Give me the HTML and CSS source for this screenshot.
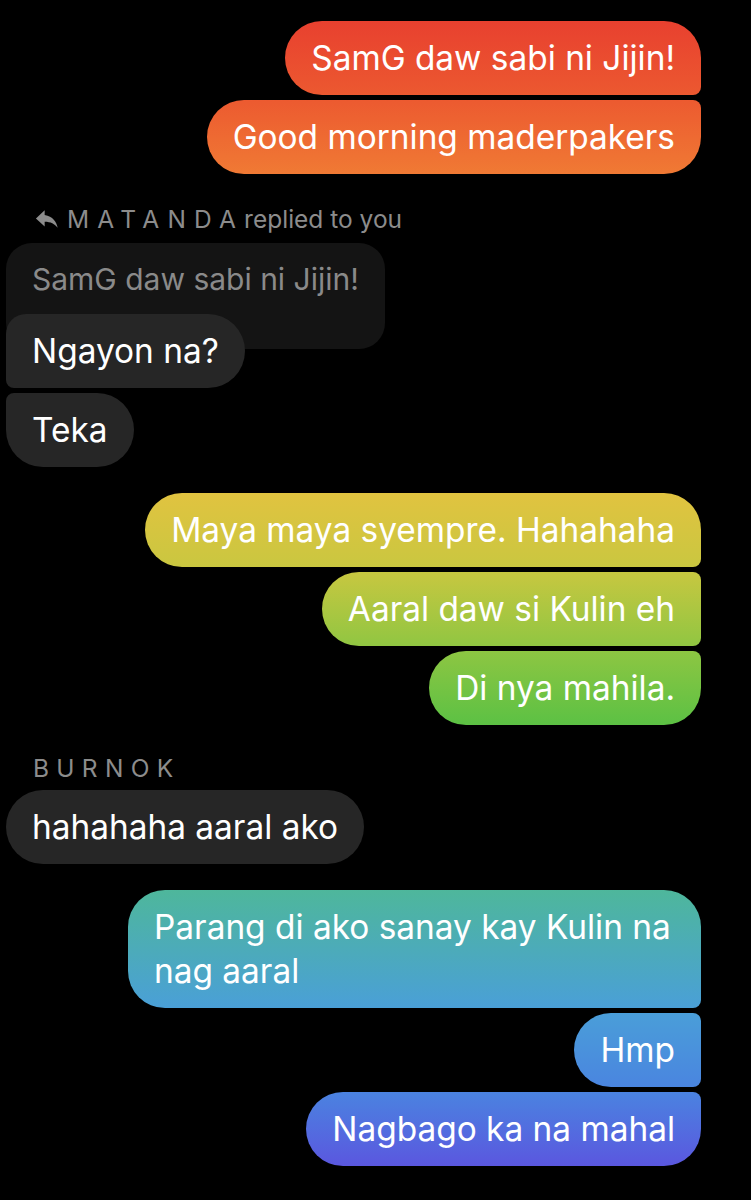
FILE: index.html
```html
<!DOCTYPE html>
<html lang="en">
<head>
  <meta charset="UTF-8">
  <meta name="viewport" content="width=device-width, initial-scale=1.0">
  <title>Chat</title>
  <link rel="stylesheet" href="styles.css">
</head>
<body>
  <div class="chat">
    <div class="group sent">
      <div class="bubble first">SamG daw sabi ni Jijin!</div>
      <div class="bubble last">Good morning maderpakers</div>
    </div>

    <div class="group received">
      <div class="label">
        <svg class="reply-icon" viewBox="0 0 24 24" width="28" height="28"><path d="M10 8.5V4.5L2.5 11.5 10 18.5v-4.2c5.2 0 8.6 1.7 11.2 5.3-1.1-5.2-4.2-10.1-11.2-11.1z" fill="currentColor"/></svg><span class="name">MATANDA</span> replied to you
      </div>
      <div class="quote">SamG daw sabi ni Jijin!</div>
      <div class="bubble first">Ngayon na?</div>
      <div class="bubble last">Teka</div>
    </div>

    <div class="group sent">
      <div class="bubble first">Maya maya syempre. Hahahaha</div>
      <div class="bubble">Aaral daw si Kulin eh</div>
      <div class="bubble last">Di nya mahila.</div>
    </div>

    <div class="group received">
      <div class="label"><span class="name tight">BURNOK</span></div>
      <div class="bubble first last">hahahaha aaral ako</div>
    </div>

    <div class="group sent">
      <div class="bubble first">Parang di ako sanay kay Kulin na nag aaral</div>
      <div class="bubble">Hmp</div>
      <div class="bubble last">Nagbago ka na mahal</div>
    </div>
  </div>
</body>
</html>
```

FILE: styles.css
```css
body {
  margin: 0;
  background: #000;
  font-family: Inter, "Noto Sans", sans-serif;
  color: #fff;
}
.chat {
  display: flex;
  flex-direction: column;
  padding-top: 21px;
  height: 1179px;
}
.group {
  display: flex;
  flex-direction: column;
  gap: 5px;
  margin-bottom: 26px;
}
.group.sent {
  align-items: flex-end;
  padding-right: 50px;
}
.group.received {
  align-items: flex-start;
  padding-left: 6px;
  margin-top: -2px;
}
.bubble {
  max-width: 521px;
  padding: 15px 26px;
  font-size: 33.4px;
  line-height: 44px;
  border-radius: 37px;
  position: relative;
}
.sent .bubble {
  background: linear-gradient(to bottom,
    #e8382d 0px,
    #e8402f 20px,
    #ec5a30 100px,
    #f07a34 175px,
    #e1c340 492px,
    #c9c740 570px,
    #8fc642 648px,
    #5cc144 725px,
    #4eb79b 889px,
    #4a9fd8 1010px,
    #4a84e0 1090px,
    #5b56df 1168px,
    #5f50de 1200px) fixed;
  border-top-right-radius: 8px;
  border-bottom-right-radius: 8px;
}
.sent .bubble.first {
  border-top-right-radius: 37px;
}
.sent .bubble.last {
  border-bottom-right-radius: 37px;
}
.received .bubble {
  background: #262626;
  border-top-left-radius: 8px;
  border-bottom-left-radius: 8px;
}
.received .bubble.first {
  border-top-left-radius: 20px;
}
.received .bubble.last {
  border-bottom-left-radius: 37px;
}
.received .bubble.first.last {
  border-top-left-radius: 37px;
}
.label {
  height: 24px;
  line-height: 24px;
  margin: 7px 0 5px 27px;
  font-size: 24.5px;
  color: #8c8c8c;
  white-space: nowrap;
}
.reply-icon {
  vertical-align: -5px;
  margin: 0 6px 0 0;
}
.name {
  letter-spacing: 8.2px;
  margin-right: -7px;
}
.name.tight {
  letter-spacing: 7.3px;
}
.quote {
  background: #141414;
  color: #8a8a8a;
  font-size: 30px;
  line-height: 44px;
  padding: 14px 26px 48px;
  border-radius: 26px;
  margin-top: 4px;
  margin-bottom: -40px;
}
```
